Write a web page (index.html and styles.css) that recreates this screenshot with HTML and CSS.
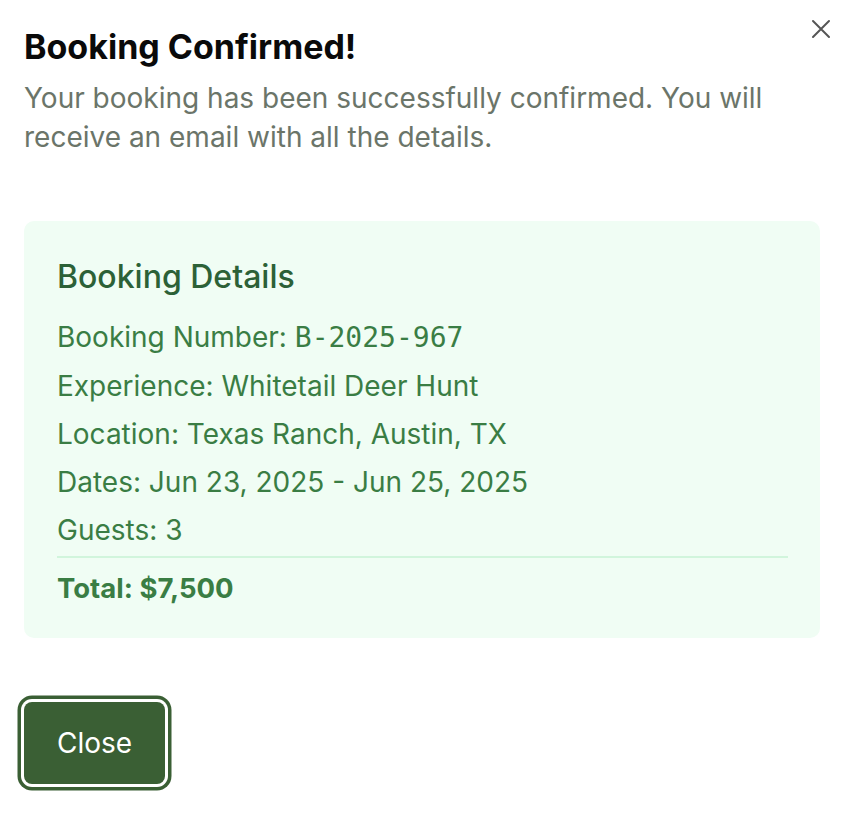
FILE: index.html
```html
<!DOCTYPE html>
<html>
<head>
<meta charset="utf-8">
<link rel="stylesheet" href="styles.css">
</head>
<body>
<div class="dialog">
  <button class="close-x" aria-label="Close">
    <svg width="20" height="20" viewBox="0 0 20 20" fill="none" stroke="#555" stroke-width="2" stroke-linecap="round"><path d="M2 2L18 18M18 2L2 18"/></svg>
  </button>
  <h2 class="title">Booking Confirmed!</h2>
  <p class="desc">Your booking has been successfully confirmed. You will receive an email with all the details.</p>
  <div class="card">
    <h3 class="card-title">Booking Details</h3>
    <div class="rows">
      <p class="row">Booking Number: <span class="mono">B-2025-967</span></p>
      <p class="row">Experience: Whitetail Deer Hunt</p>
      <p class="row">Location: Texas Ranch, Austin, TX</p>
      <p class="row">Dates: Jun 23, 2025 - Jun 25, 2025</p>
      <p class="row">Guests: 3</p>
    </div>
    <p class="total">Total: $7,500</p>
  </div>
  <div class="footer">
    <button class="btn">Close</button>
  </div>
</div>
</body>
</html>
```

FILE: styles.css
```css
html, body {
  margin: 0;
  padding: 0;
  background: #ffffff;
}
body {
  font-family: Inter, "Noto Sans", sans-serif;
}
.dialog {
  position: relative;
  padding: 27px 24px 24px 24px;
  width: 796px;
}
.close-x {
  position: absolute;
  top: 19px;
  right: 13px;
  background: none;
  border: none;
  padding: 0;
  width: 20px;
  height: 20px;
  cursor: pointer;
}
.title {
  margin: 0;
  font-size: 34px;
  font-weight: 700;
  line-height: 40px;
  color: #0a0a0a;
}
.desc {
  margin: 12px 0 0 0;
  font-size: 28px;
  line-height: 39px;
  color: #6b7569;
}
.card {
  margin-top: 64px;
  background: #f0fdf4;
  border-radius: 10px;
  padding: 32px 32px 30px 33px;
}
.card-title {
  margin: 0;
  font-size: 32px;
  font-weight: 500;
  line-height: 48px;
  color: #2c6137;
}
.rows {
  margin-top: 12px;
  display: flex;
  flex-direction: column;
}
.row {
  margin: 0;
  font-size: 28px;
  line-height: 48px;
  color: #3a7d44;
}
.mono {
  font-family: "DejaVu Sans Mono", monospace;
  font-size: 28px;
}
.total {
  margin: 2px 0 0 0;
  padding-top: 10px;
  border-top: 2px solid #d1f5dc;
  font-size: 27.5px;
  font-weight: 700;
  line-height: 40px;
  color: #3a7d44;
}
.footer {
  margin-top: 64px;
}
.btn {
  font-family: Inter, "Noto Sans", sans-serif;
  background: #3a5f34;
  color: #ffffff;
  border: none;
  border-radius: 8px;
  font-size: 28px;
  padding: 0;
  height: 82px;
  width: 141px;
  box-shadow: 0 0 0 3px #ffffff, 0 0 0 6.5px #3a5f34;
  cursor: pointer;
}
```
